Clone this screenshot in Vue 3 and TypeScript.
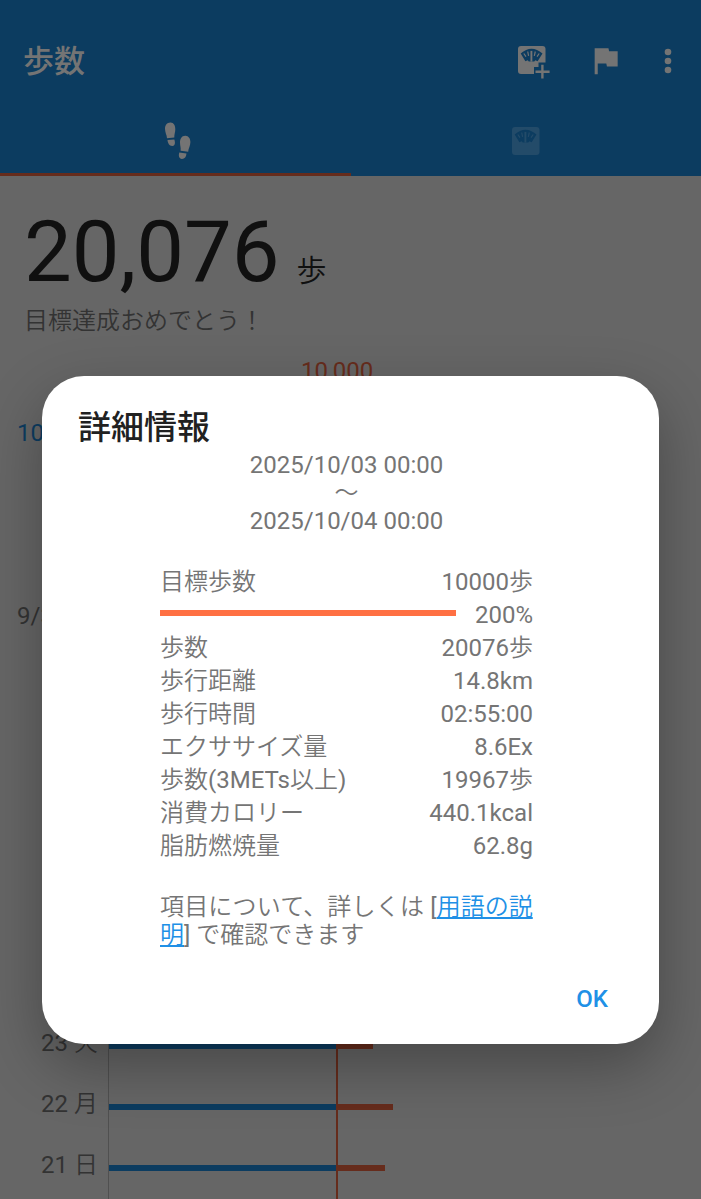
<script setup lang="ts">
interface DayRow {
  label: string
  month?: boolean
  current?: boolean
  base?: number
  extra?: number
}

interface Detail {
  label: string
  value: string
}

const days: DayRow[] = [
  { label: '10/3', month: true, current: true },
  { label: '' },
  { label: '' },
  { label: '9/30', month: true },
  { label: '' },
  { label: '' },
  { label: '' },
  { label: '' },
  { label: '' },
  { label: '' },
  { label: '23 火', base: 228, extra: 36 },
  { label: '22 月', base: 228, extra: 56 },
  { label: '21 日', base: 228, extra: 48 },
  { label: '' },
]

const details: Detail[] = [
  { label: '歩数', value: '20076歩' },
  { label: '歩行距離', value: '14.8km' },
  { label: '歩行時間', value: '02:55:00' },
  { label: 'エクササイズ量', value: '8.6Ex' },
  { label: '歩数(3METs以上)', value: '19967歩' },
  { label: '消費カロリー', value: '440.1kcal' },
  { label: '脂肪燃焼量', value: '62.8g' },
]
</script>

<template>
  <div class="screen">
    <header class="appbar">
      <div class="toolbar">
        <h1 class="app-title">歩数</h1>
        <svg class="ic-add" viewBox="0 0 34 34">
          <rect x="1" y="0" width="27.5" height="28" rx="3" class="fg" />
          <path d="M3.700 7.500Q14.500-2 25.500 7.500L20.600 15.200L18.300 14.200L17.300 15.400H11.800L10.700 14.200L8.400 15.200Z" class="bg" />
          <path d="M14.400 4.900V15.600" class="ticks wide" />
          <path d="M10.700 5.500L11.600 9.900M18.300 5.500L17.300 9.900M6.800 7.500L9 10.700M22.200 7.500L20 10.700" class="ticks" />
          <path d="M17 21h4.500v-4.500H29V21h5v8h-5v5h-7.500v-5H17z" class="bg" />
          <path d="M24.200 18.800h2.400v5.600h6v2.600h-6V32.500h-2.400v-5.500h-5.700v-2.600h5.700z" class="fg" />
        </svg>
        <svg class="ic-flag" viewBox="0 0 24 24">
          <path d="M14.400 6L14 4H5v17h2v-7h5.600l.4 2h7V6z" class="fg" />
        </svg>
        <svg class="ic-more" viewBox="0 0 8 26">
          <circle cx="4" cy="4" r="3.300" class="fg" />
          <circle cx="4" cy="13" r="3.300" class="fg" />
          <circle cx="4" cy="22" r="3.300" class="fg" />
        </svg>
      </div>
      <nav class="tabs">
        <div class="tab active">
          <svg class="ic-steps" viewBox="0 0 26 37">
            <path d="M5.300.5C8.600.3 10.400 3.500 10.300 7.500C10.200 10.800 9.200 12.500 9.300 15.500L2 16.200C1.800 13 0 10.500 0 6.800C0 3 2 .7 5.300.5Z" class="fg" />
            <path d="M2.500 18.100L9.300 17.500C10.600 21 9.900 23.900 7.500 24C4.500 24.200 2.800 21.500 2.500 18.100Z" class="fg" />
            <path d="M20.500 13.800C23.500 14 25.500 16.500 25.400 20.300C25.300 24 23.400 26.500 23.200 29.700L15.600 28.700C16 25.500 15 23.800 15 20.500C15 16.500 17 13.600 20.500 13.800Z" class="fg" />
            <path d="M14.300 30.500L21.500 31.500C21.200 34.700 19.700 37 16.800 36.900C14.200 36.800 13.200 33.900 14.300 30.500Z" class="fg" />
          </svg>
        </div>
        <div class="tab">
          <svg class="ic-scale" viewBox="1 0 28 28">
            <rect x="1" width="27.500" height="28" rx="3" class="fg" />
            <path d="M3.700 7.500Q14.500-2 25.500 7.500L20.600 15.200L18.300 14.200L17.300 15.400H11.800L10.700 14.200L8.400 15.200Z" class="bg" />
            <path d="M14.400 4.900V15.600" class="ticks wide" />
            <path d="M10.700 5.500L11.600 9.900M18.300 5.500L17.300 9.900M6.800 7.500L9 10.700M22.200 7.500L20 10.700" class="ticks" />
          </svg>
        </div>
      </nav>
    </header>

    <main>
      <div class="total"><span class="count">20,076</span><span class="unit">歩</span></div>
      <p class="cheer">目標達成おめでとう！</p>
      <div class="goal">10,000</div>
      <div class="chart">
        <div v-for="(d, i) in days" :key="i" class="day">
          <span class="day-label" :class="{ month: d.month, current: d.current }">{{ d.label }}</span>
          <div class="plot">
            <div class="bar base" :style="{ width: (d.base ?? 0) + 'px' }"></div>
            <div class="bar extra" :style="{ width: (d.extra ?? 0) + 'px' }"></div>
          </div>
        </div>
        <div class="goal-line"></div>
      </div>
    </main>

    <section class="dialog" role="dialog">
      <h2 class="dialog-title">詳細情報</h2>
      <div class="period">
        <div>2025/10/03 00:00</div>
        <div>～</div>
        <div>2025/10/04 00:00</div>
      </div>
      <div class="details">
        <div class="row"><span>目標歩数</span><span class="val">10000歩</span></div>
        <div class="row">
          <div class="progress"></div>
          <span class="val">200%</span>
        </div>
        <div v-for="r in details" :key="r.label" class="row">
          <span>{{ r.label }}</span><span class="val">{{ r.value }}</span>
        </div>
      </div>
      <p class="note"><span class="lead">項目について、詳しくは [</span><a>用語の説<br />明</a>] で確認できます</p>
      <div class="actions"><button class="ok">OK</button></div>
    </section>
  </div>
</template>

<style>
body {
  margin: 0;
  overflow: hidden;
}
</style>

<style scoped>
.screen {
  position: relative;
  width: 701px;
  height: 1199px;
  overflow: hidden;
  background: #666;
  color: #333;
  font-family: Roboto, "Noto Sans CJK JP DemiLight", "Noto Sans CJK JP", sans-serif;
  font-size: 24px;
  font-weight: 400;
}
h1, h2, p { margin: 0; }
svg { display: block; flex: none; }
.fg { fill: #747474; }
.bg { fill: #0c3c60; }
.ticks { fill: none; stroke: #747474; stroke-width: 1.2; }
.ticks.wide { stroke-width: 1.9; }
.appbar {
  height: 176px;
  background: #0c3c60;
}
.toolbar {
  display: flex;
  height: 121px;
  align-items: center;
  box-sizing: border-box;
  padding-left: 23px;
}
.app-title {
  width: 494px;
  padding-top: 3px;
  font-family: Roboto, "Noto Sans CJK JP", sans-serif;
  font-size: 31px;
  line-height: 40px;
  font-weight: 500;
  color: #747474;
}
.ic-add { width: 34px; height: 34px; margin-top: 5px; }
.ic-flag { width: 36.800px; height: 36.800px; margin-left: 36px; }
.ic-more { width: 8px; height: 26px; margin-left: 40px; }
.tabs { display: flex; height: 55px; }
.tab {
  flex: 1;
  display: flex;
  justify-content: center;
  box-sizing: border-box;
  border-bottom: 3px solid transparent;
}
.tab.active { border-color: #662c1c; }
.ic-steps { width: 26px; height: 37px; margin: 1px 0 0 5px; }
.ic-scale { width: 28px; height: 28px; margin-top: 6px; }
.ic-scale .fg { fill: #234b69; }
.ic-scale .ticks { stroke: #234b69; }
.total {
  display: flex;
  align-items: baseline;
  height: 126px;
  padding-left: 24px;
  color: #101010;
}
.count { font-size: 85px; line-height: 153px; }
.unit { font-size: 30px; margin-left: 17px; }
.cheer {
  height: 38px;
  padding-left: 24px;
  line-height: 38px;
}
.goal {
  height: 28px;
  margin: 17px 0 0 301px;
  line-height: 28px;
  color: #662c1c;
}
.chart { position: relative; margin-top: 18px; }
.day { display: flex; height: 61px; }
.day-label {
  width: 98px;
  padding-right: 10px;
  text-align: right;
  line-height: 61px;
  white-space: nowrap;
}
.day-label.month {
  box-sizing: border-box;
  width: 108px;
  padding: 0 0 0 17px;
  text-align: left;
}
.day-label.current { color: #0c3c60; }
.plot {
  display: flex;
  align-items: center;
  flex: 1;
  padding-top: 4px;
  border-left: 1px solid #505050;
}
.bar { height: 6px; }
.base { background: #0c3c60; }
.extra { background: #662c1c; }
.goal-line {
  position: absolute;
  top: 0;
  bottom: 0;
  left: 336px;
  width: 2px;
  background: #662c1c;
}
.dialog {
  position: absolute;
  left: 42px;
  top: 376px;
  width: 617px;
  height: 668px;
  box-sizing: border-box;
  padding: 31px 36px 0;
  border-radius: 42px;
  background: #fff;
  box-shadow: 0 22px 60px rgba(0, 0, 0, 0.3);
  color: #757575;
}
.dialog-title {
  font-family: Roboto, "Noto Sans CJK JP", sans-serif;
  font-size: 33px;
  line-height: 42px;
  font-weight: 500;
  color: #212121;
}
.period {
  margin-top: 2px;
  padding-right: 8px;
  line-height: 28px;
  text-align: center;
}
.details { width: 373px; margin: 31px 0 0 82px; }
.row {
  display: flex;
  height: 33px;
  align-items: center;
  justify-content: space-between;
  line-height: 33px;
  white-space: nowrap;
}
.progress { width: 296px; height: 6px; margin-bottom: 5px; background: #ff7043; }
.note {
  width: 400px;
  margin: 30px 0 0 82px;
  line-height: 28px;
  white-space: nowrap;
}
.lead { letter-spacing: 0.180px; }
.note a { color: #2090e6; text-decoration: underline; text-underline-offset: 2px; }
.actions { display: flex; justify-content: flex-end; margin-top: 34px; }
.ok {
  margin-right: 15px;
  padding: 0;
  border: 0;
  background: none;
  font: 500 24px/32px Roboto, sans-serif;
  color: #2090e6;
}
</style>
